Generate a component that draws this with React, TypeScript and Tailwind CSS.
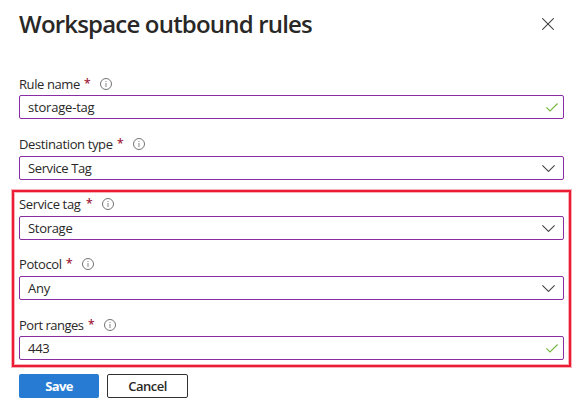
import React from "react";

const InfoIcon = () => (
  <svg className="block size-3 shrink-0" viewBox="0 0 12 12" fill="none">
    <circle cx="6" cy="6" r="5.5" stroke="#737373" />
    <path d="M6 5v4" stroke="#858585" />
    <path d="M6 3v1" stroke="#858585" />
  </svg>
);

const CheckIcon = () => (
  <svg className="mr-[5px] h-[9px] w-3" viewBox="0 0 12 9" fill="none">
    <path d="M.4 4.4 4 8 11.6.5" stroke="#74b843" strokeWidth="1.2" />
  </svg>
);

const ChevronIcon = () => (
  <svg className="mr-2 h-[7px] w-[13px]" viewBox="0 0 13 7" fill="none">
    <path d="M.4.4 6.5 6.4 12.6.4" stroke="#444" strokeWidth="1.1" />
  </svg>
);

type FieldProps = {
  label: string;
  labelClass: string;
  value: string;
  valueClass: string;
  kind: "text" | "select";
  gapClass?: string;
};

function Field({ label, labelClass, value, valueClass, kind, gapClass = "gap-[3px]" }: FieldProps) {
  return (
    <div className={`flex flex-col ${gapClass}`}>
      <div className="flex h-[18px] items-center">
        <span className={`whitespace-nowrap ${labelClass}`}>{label}</span>
        <span className="w-[6px] text-[12px] font-semibold text-[#a01c3a]">*</span>
        <span className="ml-[10px]">
          <InfoIcon />
        </span>
      </div>
      <div className="flex h-6 items-center justify-between rounded-[2px] border border-[#8a2da5] pl-2">
        <span className={`whitespace-nowrap ${valueClass}`}>{value}</span>
        {kind === "text" ? <CheckIcon /> : <ChevronIcon />}
      </div>
    </div>
  );
}

export default function App() {
  return (
    <main className="h-[409px] w-[583px] overflow-hidden bg-white font-['Open_Sans','Noto_Sans',sans-serif] text-[13px] leading-[18px] text-[#292827]">
      <header className="flex h-[75px] items-start justify-between pr-[29px] pl-[19px]">
        <h1 className="mt-[8px] w-[293px] text-[24px] leading-8 font-semibold tracking-[-0.81px] whitespace-nowrap">
          Workspace outbound rules
        </h1>
        <svg className="mt-[18px] h-3 w-3" viewBox="0 0 12 12" fill="none">
          <path d="m.3.3 11.4 11.4M11.7.3.3 11.7" stroke="#444" strokeWidth="1.1" />
        </svg>
      </header>
      <section className="flex flex-col gap-4 px-[19px]">
        <Field label="Rule name" labelClass="w-[65px] tracking-[-0.4px]" value="storage-tag" valueClass="tracking-[-0.2px]" kind="text" gapClass="gap-[2px]" />
        <Field label="Destination type" labelClass="w-[98px] tracking-[-0.37px]" value="Service Tag" valueClass="tracking-[-0.4px]" kind="select" />
      </section>
      <section className="mt-[9px] ml-[11px] flex h-[179px] w-[561px] flex-col border border-[#fab0b8]">
        <div className="flex grow flex-col gap-[15px] border-2 border-[#ed1c35] px-[5px] pt-[3px] shadow-[inset_0_0_0_1px_#fab0b8]">
          <Field label="Service tag" labelClass="w-[67px] tracking-[-0.35px]" value="Storage" valueClass="tracking-[-0.3px]" kind="select" />
          <Field label="Potocol" labelClass="w-[47px] tracking-[-0.4px]" value="Any" valueClass="tracking-[-0.2px]" kind="select" />
          <div className="pt-px">
            <Field label="Port ranges" labelClass="w-[69px] tracking-[-0.5px]" value="443" valueClass="tracking-[-0.3px]" kind="text" gapClass="gap-[2px]" />
          </div>
        </div>
      </section>
      <footer className="mt-[6px] flex gap-2 pl-[19px] font-semibold">
        <button className="h-6 w-20 rounded-[2px] bg-[#287bd2] font-bold tracking-[-0.6px] text-white">Save</button>
        <button className="h-6 w-[81px] rounded-[2px] border border-[#323130] tracking-[-0.5px]">Cancel</button>
      </footer>
    </main>
  );
}
